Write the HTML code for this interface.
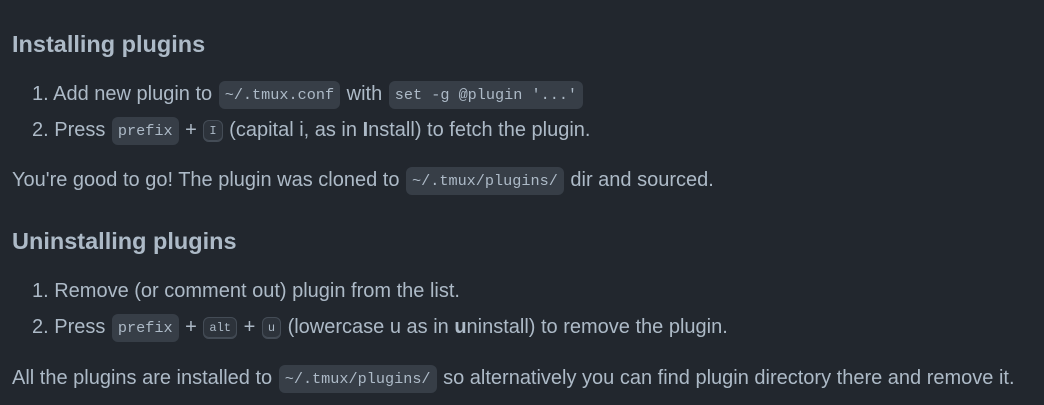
<!DOCTYPE html>
<html><head><meta charset="utf-8"><style>
body{margin:0;width:1044px;height:405px;background:#22272e;color:#adbac7;font-family:"Liberation Sans",sans-serif;font-size:20px;overflow:hidden;position:relative}
.l{position:absolute;left:12px;white-space:nowrap;line-height:26px;height:26px}
.li{left:32px}
h2{position:absolute;left:12px;margin:0;font-size:23.5px;font-weight:bold;line-height:30px;color:#adbac7}
code{font-family:"Liberation Mono",monospace;font-size:15.2px;background:#373e47;border-radius:6px;padding:5px 6px;margin:0 1px;vertical-align:1px}
kbd{font-family:"Liberation Mono",monospace;font-size:12px;background:#2d333b;border:1px solid #444c56;box-shadow:inset 0 -1px 0 #444c56;border-radius:6px;padding:3px 5px;margin:0 1px;color:#adbac7;vertical-align:2px}
</style></head><body>
<h2 style="top:29px">Installing plugins</h2>
<div class="l li" style="top:81px">1. Add new plugin to <code>~/.tmux.conf</code> with <code>set -g @plugin '...'</code></div>
<div class="l li" style="top:117px">2. Press <code>prefix</code> + <kbd>I</kbd> (capital i, as in <b>I</b>nstall) to fetch the plugin.</div>
<div class="l" style="top:167px">You're good to go! The plugin was cloned to <code>~/.tmux/plugins/</code> dir and sourced.</div>
<h2 style="top:226px">Uninstalling plugins</h2>
<div class="l li" style="top:278px">1. Remove (or comment out) plugin from the list.</div>
<div class="l li" style="top:314px">2. Press <code>prefix</code> + <kbd>alt</kbd> + <kbd>u</kbd> (lowercase u as in <b>u</b>ninstall) to remove the plugin.</div>
<div class="l" style="top:365px">All the plugins are installed to <code>~/.tmux/plugins/</code> so alternatively you can find plugin directory there and remove it.</div>
</body></html>
